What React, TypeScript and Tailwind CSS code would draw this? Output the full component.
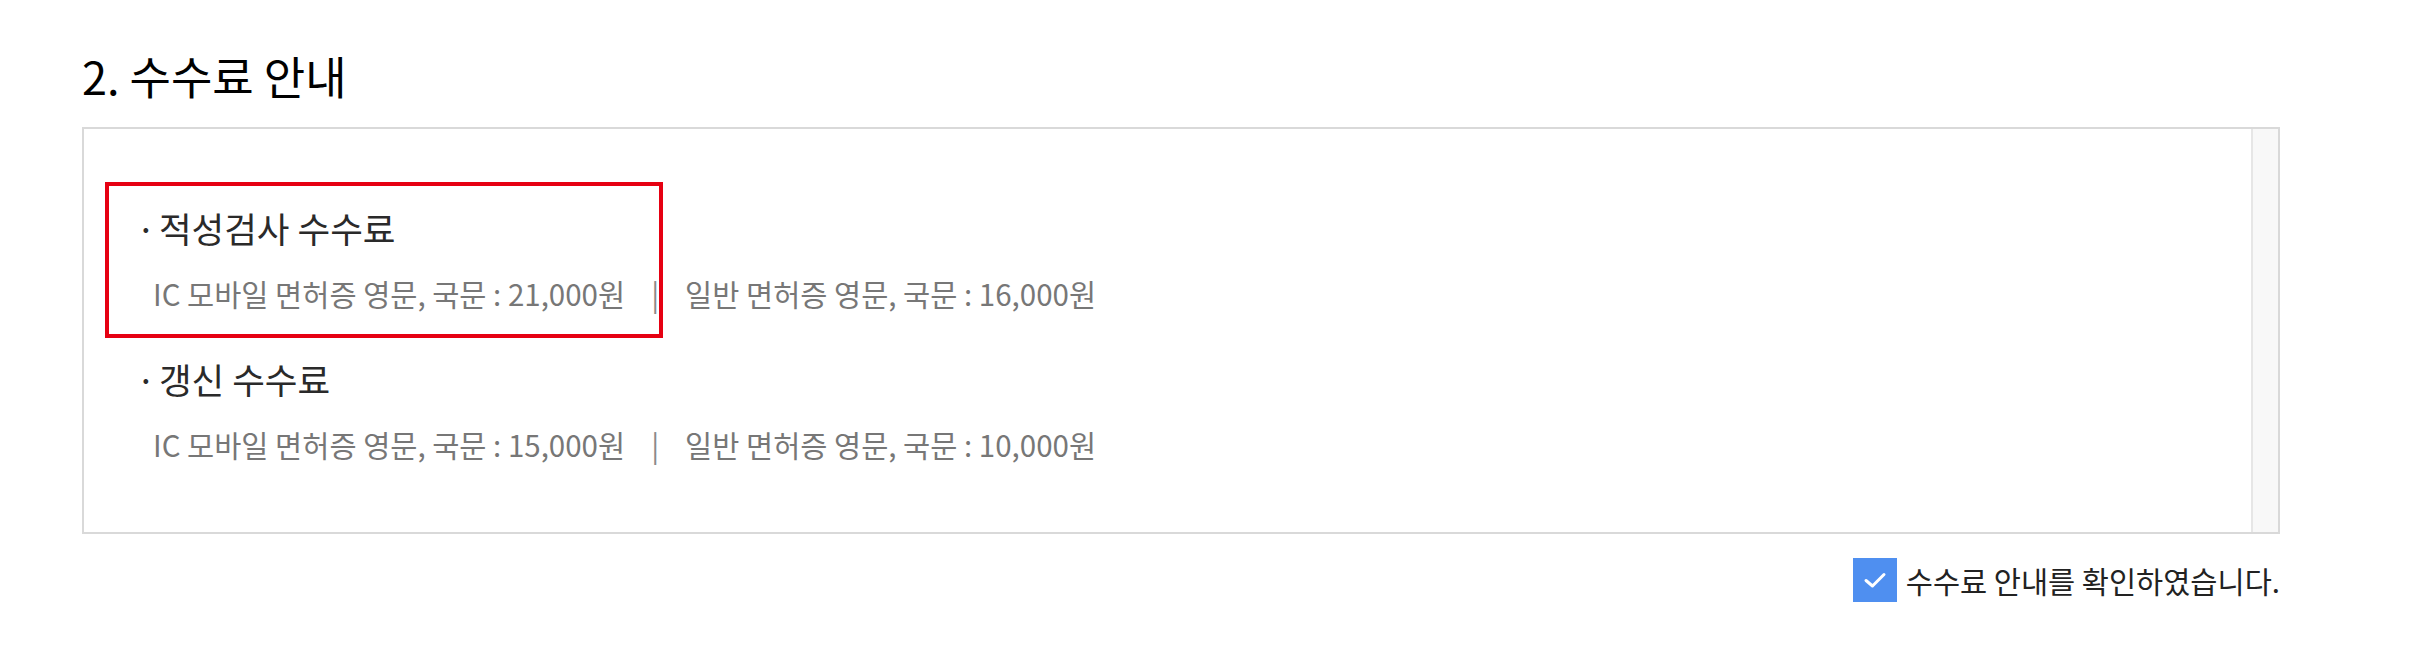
import React from "react";

const FONT = { fontFamily: '"Noto Sans CJK KR", "Noto Sans", sans-serif' };

function FeeLine({ ic, normal }: { ic: string; normal: string }) {
  return (
    <div className="mt-[23px] flex items-center pl-[69px] text-[29.5px] leading-[40px] text-[#777777]">
      <span>IC 모바일 면허증 영문, 국문 : {ic}원</span>
      <span className="mx-[26px] text-[#8a8a8a]">|</span>
      <span>일반 면허증 영문, 국문 : {normal}원</span>
    </div>
  );
}

function SubTitle({ children, className = "" }: { children: React.ReactNode; className?: string }) {
  return (
    <div className={`pl-[52px] text-[35.5px] leading-[44px] text-[#2a2a2a] ${className}`}>
      <span className="mr-[-5px]">·</span> {children}
    </div>
  );
}

export default function App() {
  return (
    <div className="min-h-[656px] bg-white pl-[82px] pt-[46px]" style={FONT}>
      <div className="w-[2198px]">
        <h2 className="text-[45px] font-normal leading-[60px] text-black">2. 수수료 안내</h2>

        <div className="mt-[21px] flex h-[407px] border-2 border-[#d9d9d9] bg-white">
          <div className="relative flex-1 pt-[77px]">
            <SubTitle>적성검사 수수료</SubTitle>
            <FeeLine ic="21,000" normal="16,000" />

            <SubTitle className="mt-[44px]">갱신 수수료</SubTitle>
            <FeeLine ic="15,000" normal="10,000" />

            <div className="pointer-events-none absolute left-[21px] top-[53px] h-[156px] w-[558px] border-4 border-[#e60012]" />
          </div>
          <div className="w-[27px] border-l-2 border-[#e6e6e6] bg-[#f8f8f8]" />
        </div>

        <div className="mt-[24px] flex items-center justify-end gap-[9px]">
          <span className="flex h-[44px] w-[44px] items-center justify-center bg-[#4f8ff0]">
            <svg width="24" height="18" viewBox="0 0 24 18" fill="none">
              <path d="M3 9.5 L9.5 15 L21 3.5" stroke="white" strokeWidth="3" strokeLinecap="round" strokeLinejoin="round" />
            </svg>
          </span>
          <span className="text-[29.5px] leading-[40px] text-[#222222]">수수료 안내를 확인하였습니다.</span>
        </div>
      </div>
    </div>
  );
}
